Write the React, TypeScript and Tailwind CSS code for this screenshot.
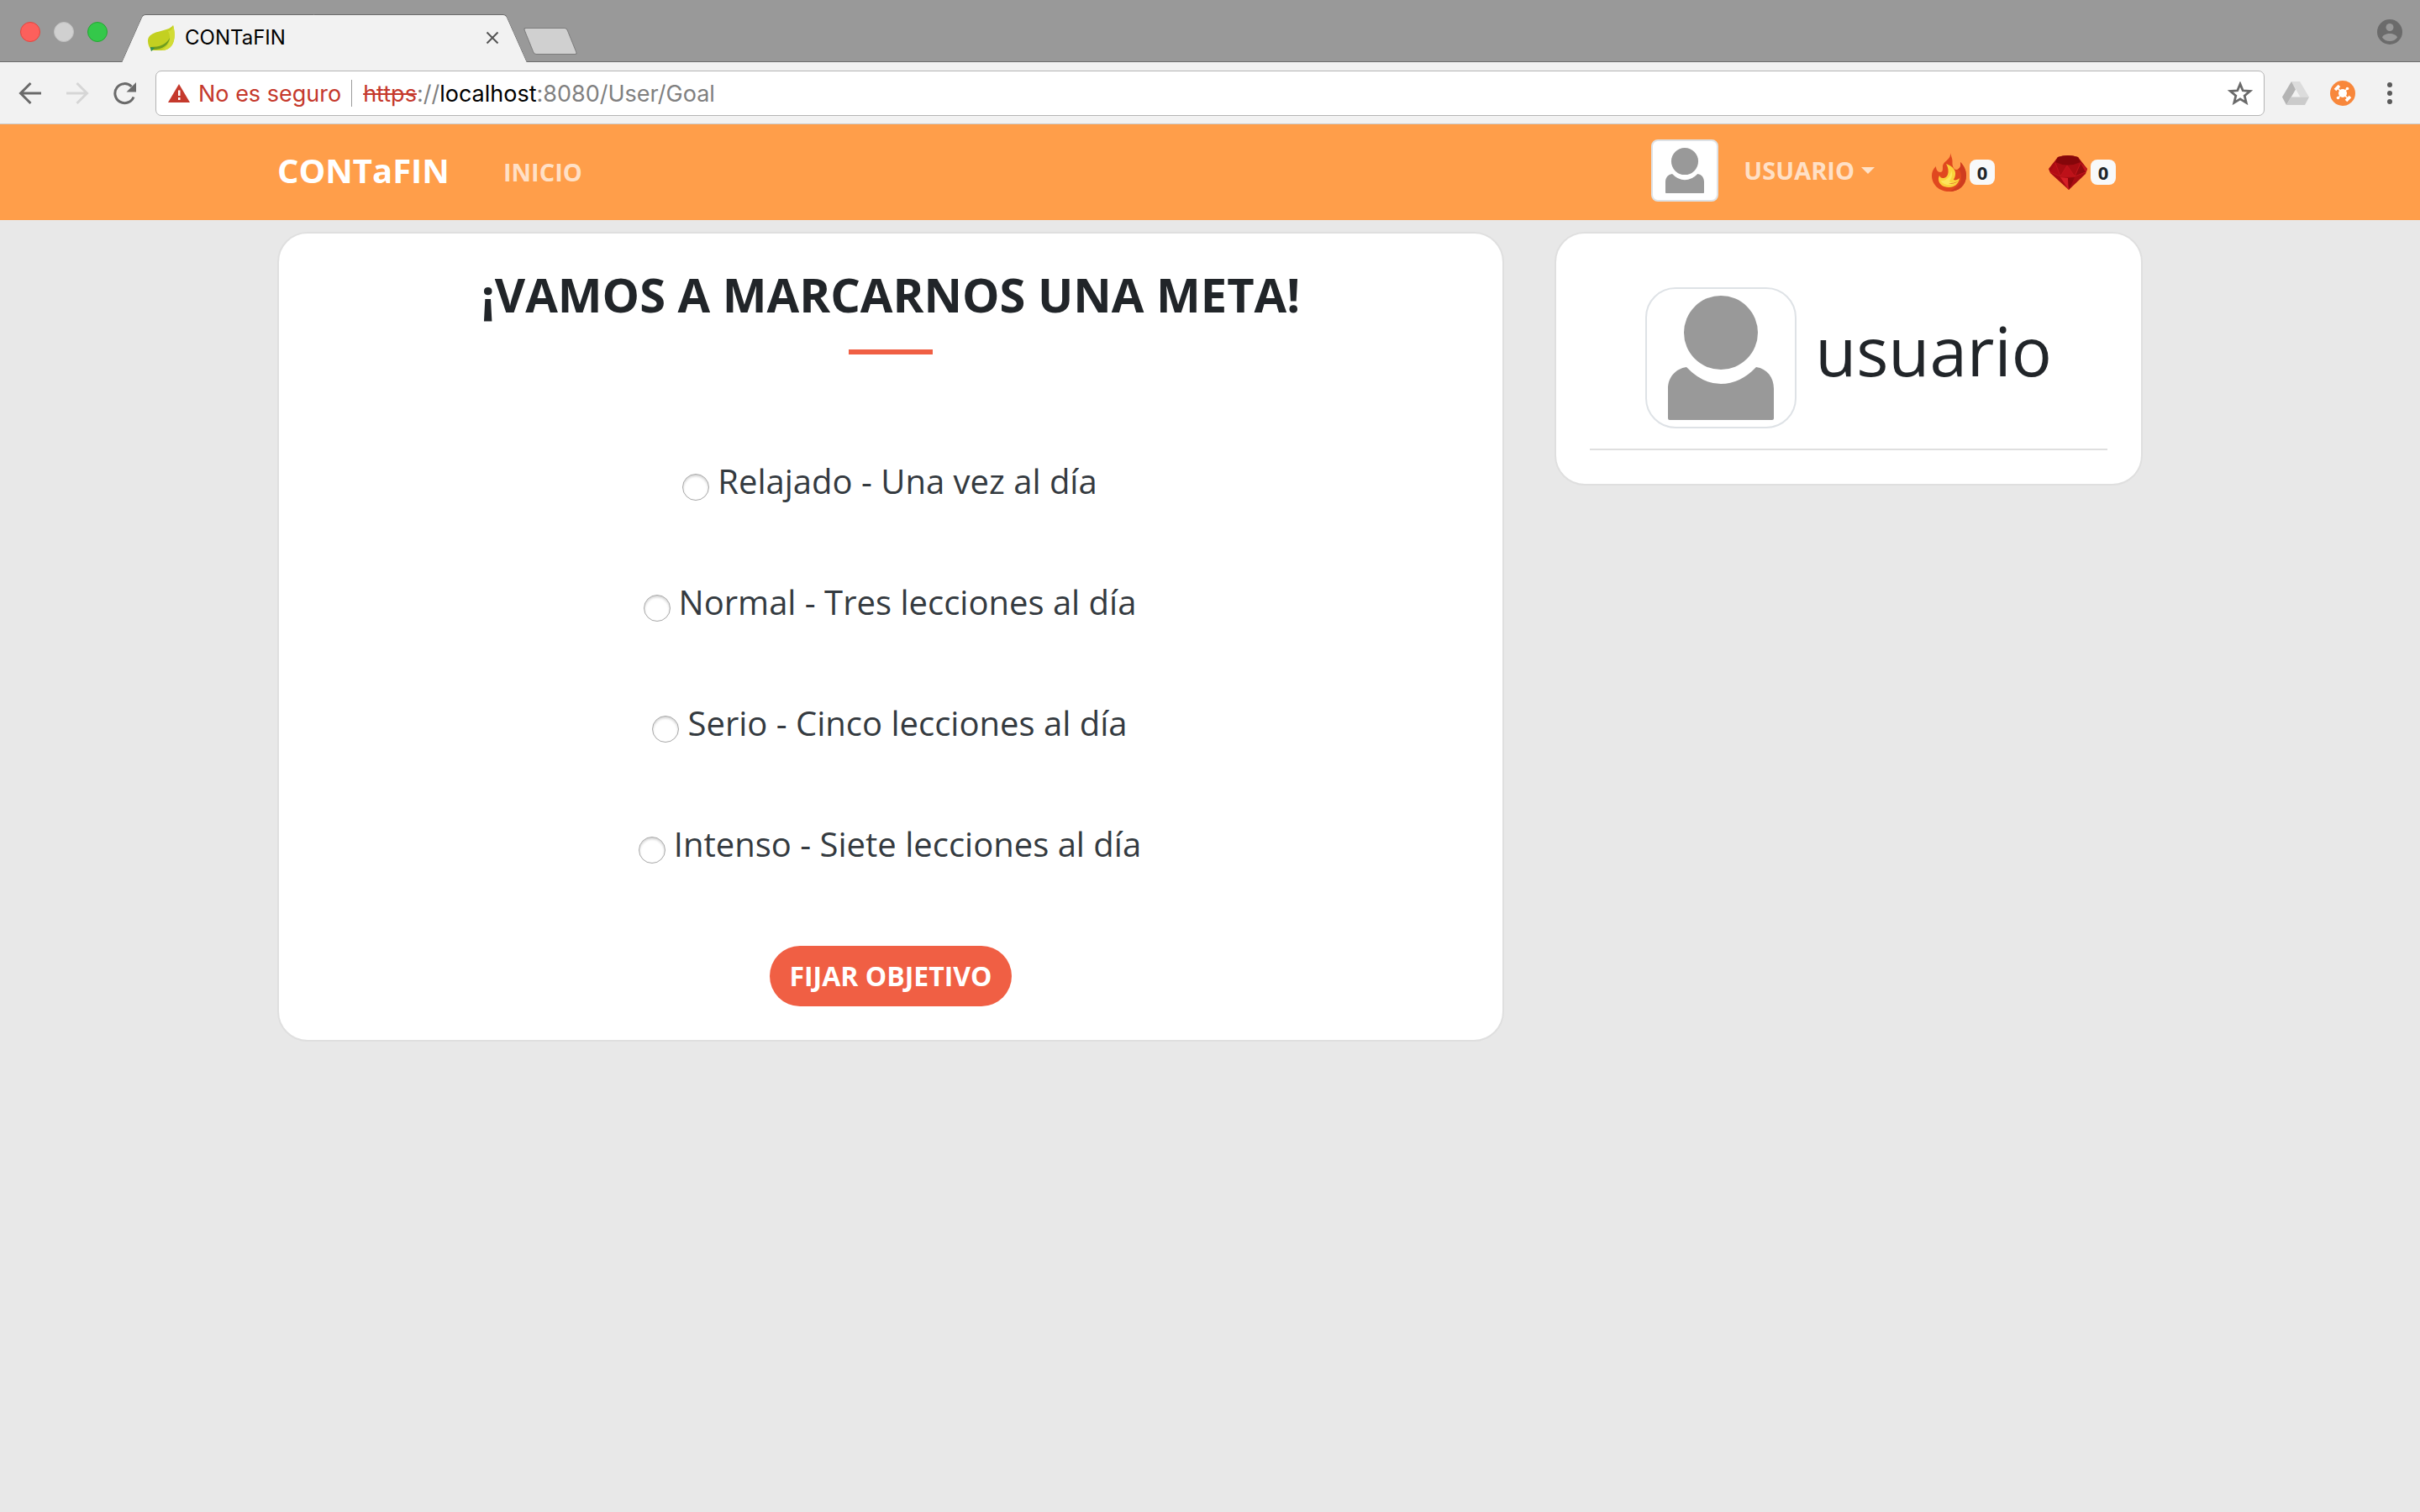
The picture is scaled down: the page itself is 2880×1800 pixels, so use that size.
import React from "react";

const goals = [
  { id: "relajado", label: "Relajado - Una vez al día" },
  { id: "normal", label: "Normal - Tres lecciones al día" },
  { id: "serio", label: "Serio - Cinco lecciones al día" },
  { id: "intenso", label: "Intenso - Siete lecciones al día" },
];

function Silhouette({ className }: { className: string }) {
  return (
    <svg viewBox="0 0 160 148" className={className} fill="#999999" aria-hidden="true">
      <circle cx="80" cy="44" r="44" />
      <path d="M39 85 Q58 105 80 105 Q103 105 122 85 C135 87 143 97 143 111 V146 Q143 148 141 148 H19 Q17 148 17 146 V111 C17 97 26 87 39 85 Z" />
    </svg>
  );
}

function LeafIcon() {
  return (
    <svg viewBox="0 0 32 32" className="h-8 w-8" aria-hidden="true">
      <path d="M30 1 C34 14 32 31 16 31 H4 C2 28 0 24 0 20 C0 6 24 10 30 1Z" fill="#c3d021" />
      <path d="M24 8 C28 8 30 4 30 1 C34 14 32 31 16 31 C27 24 28 16 24 8Z" fill="#d2dc35" />
      <path d="M3 27 C14 27 22 24 26 16 C25 24 18 30 6 30 L4 32Z" fill="#6d9c1f" />
      <path d="M3 27 L8 28 L4 32Z" fill="#2f8f5b" />
    </svg>
  );
}

function FlameIcon() {
  return (
    <svg viewBox="0 0 41 46" className="h-[46px] w-[41px]" aria-hidden="true">
      <path
        d="M22 0 C23 4 25 7 24.500 12 C24.500 16 26 20 29 20 C33 20 35 16 34 11 C38 15 41 20 41 27 C41 39 32 46 20.500 46 C9 46 0 38 0 27 C0 23 1.500 19 5 16 C5 20 7 23 10 23 C13 23 13 20 13 17 C13 9 23 9 22 0Z"
        fill="#e0481f"
      />
      <path
        d="M34 11 C38 15 41 20 41 27 C41 39 32 46 20.500 46 C30 42 36 36 35 27 C34.500 22 33 20 31 19.500 C34 18 35 15 34 11Z"
        fill="#cf3c1f"
      />
      <path
        d="M17 13 C25 16 29 21 28 26 C27.500 30 26 31 26 32 C28 33 31 32 33 30 C32 37 27 41 20.500 41 C13 41 8 37 8 31 C8 30 8.500 28 9 27 C10 29 11 30 13 30 C21 30 21 19 17 13Z"
        fill="#fbd23c"
      />
      <path d="M13 33 C18 33 23 27 23 21 C26 27 22 32 21 34 C24 37 29 35 31 34 C25 40 13 39 11 33Z" fill="#fde55c" />
      <path d="M20 36 C24 38 29 36 32 33 C28 36 24 36 20 36Z" fill="#e0661f" />
    </svg>
  );
}

function GemIcon() {
  return (
    <svg viewBox="0 0 46 41" className="h-[41px] w-[46px]" aria-hidden="true">
      <path d="M11 2 Q23 -2 35 2 L46 16 L44 22 L24 41 L2 21 L0 16Z" fill="#a80c12" />
      <path d="M11 2 Q23 -2 35 2 L38 8 Q23 15 8 8Z" fill="#85060a" />
      <path d="M22 12 L31 25 H14Z" fill="#bd1119" />
      <path d="M8 9 L14 25 L2 20Z" fill="#b30d14" />
      <path d="M38 9 L31 25 L36 20 L45 19 L46 16Z" fill="#c3161c" />
      <path d="M38 9 L44 20 L31 25Z" fill="#930a0f" />
      <path d="M14 26 L23 27 L24 41Z" fill="#d61f26" />
      <path d="M23 27 L31 26 L24 41Z" fill="#8f070c" />
      <path d="M8 9 L14 25 L22 12 L31 25 L38 9 M2 20 L14 25 H31 L44 20" stroke="#c3161c" strokeWidth="1" fill="none" />
    </svg>
  );
}

function Counter({ icon, name }: { icon: React.ReactNode; name: string }) {
  return (
    <div className="flex items-center gap-1 pt-1" title={name}>
      {icon}
      <span className="flex h-[30px] w-[30px] items-center justify-center rounded-lg bg-[#f8f9fa] text-[22px] leading-none font-bold text-[#212529]">
        0
      </span>
    </div>
  );
}

function TabStrip() {
  return (
    <div className="flex h-[74px] items-end border-b border-[#6b6b6b] bg-[#999999]">
      <div className="flex h-[73px] items-center gap-4 pt-[2px] pl-6">
        <button aria-label="Cerrar ventana" className="size-6 rounded-full border border-[#e2463f] bg-[#fc605c]" />
        <button aria-label="Minimizar" className="size-6 rounded-full border border-[#bfbfbf] bg-[#d0d0d0]" />
        <button aria-label="Maximizar" className="size-6 rounded-full border border-[#24a732] bg-[#34c84a]" />
      </div>
      <div className="relative -mb-px ml-[29px] flex h-[57px] w-[458px] items-center pb-px">
        <span className="absolute inset-y-0 left-0 w-1/2 origin-center skew-x-[-24deg] rounded-tl-[4px] border-t border-l border-[#6b6b6b] bg-[#f2f2f2]" />
        <span className="absolute inset-y-0 right-0 w-1/2 origin-center skew-x-[24deg] rounded-tr-[4px] border-t border-r border-[#6b6b6b] bg-[#f2f2f2]" />
        <span className="absolute inset-x-8 top-px bottom-0 bg-[#f2f2f2]" />
        <div className="relative flex flex-1 items-center pr-[21px] pl-[19px]">
          <LeafIcon />
          <span className="ml-3 flex-1 text-[24px] leading-8 text-black">CONTaFIN</span>
          <button aria-label="Cerrar pestaña">
            <svg viewBox="0 0 16 16" className="size-4" stroke="#555555" strokeWidth="2" aria-hidden="true">
              <path d="M1.500 1.500 L14.500 14.500 M14.500 1.500 L1.500 14.500" />
            </svg>
          </button>
        </div>
      </div>
      <button
        aria-label="Nueva pestaña"
        className="mb-2 ml-[14px] h-8 w-[52px] skew-x-[22deg] rounded-[3px] border border-[#7c7c7c] bg-[#d0d0d0]"
      />
      <button aria-label="Perfil" className="mb-5 mr-[21px] ml-auto">
        <svg viewBox="0 0 30 30" className="size-[30px]" aria-hidden="true">
          <circle cx="15" cy="15" r="15" fill="#6b6b6b" />
          <circle cx="15" cy="9.500" r="4.500" fill="#999999" />
          <path d="M6 21.500 C8 15.500 22 15.500 24 21.500 C20 27.500 10 27.500 6 21.500Z" fill="#999999" />
        </svg>
      </button>
    </div>
  );
}

function AddressBar() {
  return (
    <div className="flex h-[74px] items-center border-b border-[#cccccc] bg-[#f2f2f2] pr-[33px] pl-[22px]">
      <button aria-label="Atrás">
        <svg viewBox="0 0 28 28" className="size-7" fill="none" stroke="#6a6a6a" strokeWidth="3" aria-hidden="true">
          <path d="M27 14 H3 M14.500 2 L2.500 14 L14.500 26" />
        </svg>
      </button>
      <button aria-label="Adelante" className="ml-7">
        <svg viewBox="0 0 28 28" className="size-7" fill="none" stroke="#d6d6d6" strokeWidth="3" aria-hidden="true">
          <path d="M1 14 H25 M13.500 2 L25.500 14 L13.500 26" />
        </svg>
      </button>
      <button aria-label="Recargar" className="ml-7">
        <svg viewBox="0 0 30 28" className="h-7 w-[30px]" fill="none" aria-hidden="true">
          <path d="M25 18.500 A11.500 11.500 0 1 1 22.500 6" stroke="#6a6a6a" strokeWidth="3" />
          <path d="M28 1 V12.500 H16.500Z" fill="#6a6a6a" />
        </svg>
      </button>
      <div className="ml-[21px] flex h-[54px] flex-1 items-center rounded-[7px] border border-[#b4b4b4] bg-white pr-[13px] pl-[14px] text-[27px] leading-8">
        <svg viewBox="0 0 26 22" className="h-[22px] w-[26px]" aria-hidden="true">
          <path d="M13 0 L26 22 H0Z" fill="#c5392c" />
          <path d="M12 7.500 H14.500 V14 H12Z M12 16 H14.500 V19 H12Z" fill="#ffffff" />
        </svg>
        <span className="ml-[10px] pt-[2px] text-[#c5392c]">No es seguro</span>
        <span className="mr-[13px] ml-3 h-8 w-px bg-[#9c9c9c]" />
        <a href="https://localhost:8080/User/Goal" className="flex-1 pt-[2px] text-[#808080]">
          <span className="text-[#c5392c] line-through">https</span>://<span className="text-black">localhost</span>
          :8080/User/Goal
        </a>
        <button aria-label="Añadir a favoritos">
          <svg viewBox="0 0 30 28" className="h-7 w-[30px]" aria-hidden="true">
            <path
              d="M15 3 L18.200 10.800 L26.700 11.500 L20.200 17 L22.200 25.200 L15 20.800 L7.800 25.200 L9.800 17 L3.300 11.500 L11.800 10.800Z"
              fill="none"
              stroke="#6a6a6a"
              strokeWidth="2.800"
            />
          </svg>
        </button>
      </div>
      <button aria-label="Google Drive" className="ml-[21px]">
        <svg viewBox="0 0 32 28" className="h-7 w-8" aria-hidden="true">
          <path d="M11 0 H21 L32 18.500 H21.500Z" fill="#dcdcdc" />
          <path d="M11 0 L16 9.500 L5 28 L0 18.500Z" fill="#b4b4b4" />
          <path d="M10.500 18.500 H32 L27 28 H5Z" fill="#cbcbcb" />
        </svg>
      </button>
      <button aria-label="Extensión" className="ml-[25px]">
        <svg viewBox="0 0 30 30" className="size-[30px]" aria-hidden="true">
          <circle cx="15" cy="15" r="15" fill="#f8873b" />
          <circle cx="15" cy="15" r="5" fill="#ffffff" />
          <path d="M9 9 L21 21 M21 9 L9 21" stroke="#ffffff" strokeWidth="1.500" />
          <circle cx="20.500" cy="9.500" r="1.800" fill="#ffffff" />
          <circle cx="9.500" cy="20.500" r="1.800" fill="#ffffff" />
          <path d="M6 11 L11 6 M19 24 L24 19" stroke="#ffffff" strokeWidth="3.600" />
        </svg>
      </button>
      <button aria-label="Menú" className="ml-[38px]">
        <svg viewBox="0 0 6 28" className="h-7 w-[6px]" fill="#5a5a5a" aria-hidden="true">
          <circle cx="3" cy="4" r="3" />
          <circle cx="3" cy="14" r="3" />
          <circle cx="3" cy="24" r="3" />
        </svg>
      </button>
    </div>
  );
}

function NavBar() {
  return (
    <nav className="bg-[#ff9e4a] pt-[18px] pb-[22px] font-['Open_Sans',sans-serif] font-bold">
      <div className="mx-auto flex max-w-[2280px] items-center px-[30px]">
        <a href="#inicio" className="text-[40px] leading-[60px] text-white">
          CONTaFIN
        </a>
        <a href="#inicio" className="ml-16 pt-1 text-[29px] leading-10 text-white/70">
          INICIO
        </a>
        <div className="ml-auto flex items-center pr-8">
          <span className="rounded-lg border-2 border-[#dee2e6] bg-white p-2">
            <Silhouette className="h-[54px] w-[60px]" />
          </span>
          <button className="ml-[30px] flex items-center gap-2 text-[29px] leading-10 text-white/70">
            USUARIO
            <span className="border-x-8 border-t-8 border-x-transparent border-t-white/70" />
          </button>
          <div className="ml-[68px] flex items-center gap-16">
            <Counter icon={<FlameIcon />} name="Racha" />
            <Counter icon={<GemIcon />} name="Gemas" />
          </div>
        </div>
      </div>
    </nav>
  );
}

function GoalCard() {
  return (
    <section className="col-span-2 flex flex-col items-center rounded-[36px] border-2 border-[#dfdfdf] bg-white p-10">
      <h1 className="text-[56px] leading-[64px] font-bold text-[#212529]">¡VAMOS A MARCARNOS UNA META!</h1>
      <span className="mt-[34px] h-[6px] w-[100px] bg-[#f05f44]" />
      <form className="mt-[121px] flex flex-col items-center" onSubmit={(e) => e.preventDefault()}>
        <div className="flex flex-col items-center gap-[84px]">
          {goals.map((goal) => (
            <label key={goal.id} className="flex items-center gap-[10px] pr-[2px] text-[40px] leading-[60px] text-[#343a40]">
              <input
                type="radio"
                name="goal"
                value={goal.id}
                className="mt-[14px] size-8 appearance-none rounded-full border border-[#a8a8a8] bg-white shadow-[inset_0_2px_3px_rgba(0,0,0,0.18)] checked:border-8 checked:border-[#f05f44]"
              />
              {goal.label}
            </label>
          ))}
        </div>
        <button
          type="submit"
          className="mt-[91px] h-[72px] rounded-full bg-[#f05f44] px-[23px] text-[32px] leading-[48px] font-bold text-white"
        >
          FIJAR OBJETIVO
        </button>
      </form>
    </section>
  );
}

function ProfileCard() {
  return (
    <aside className="rounded-[36px] border-2 border-[#dfdfdf] bg-white p-10">
      <div className="flex items-center justify-center gap-[22px] py-6">
        <span className="rounded-[36px] border-2 border-[#dee2e6] bg-white p-2">
          <Silhouette className="h-[148px] w-[160px]" />
        </span>
        <h2 className="pb-[18px] text-[80px] leading-[96px] text-[#212529]">usuario</h2>
      </div>
      <hr className="border-t-2 border-[#dfdfdf]" />
    </aside>
  );
}

export default function App() {
  return (
    <div className="min-h-screen bg-[#e8e8e8] font-[Inter,sans-serif]">
      <header>
        <TabStrip />
        <AddressBar />
      </header>
      <NavBar />
      <main className="mx-auto grid max-w-[2280px] grid-cols-3 items-start gap-[60px] px-[30px] pt-[14px] font-['Open_Sans',sans-serif]">
        <GoalCard />
        <ProfileCard />
      </main>
    </div>
  );
}
